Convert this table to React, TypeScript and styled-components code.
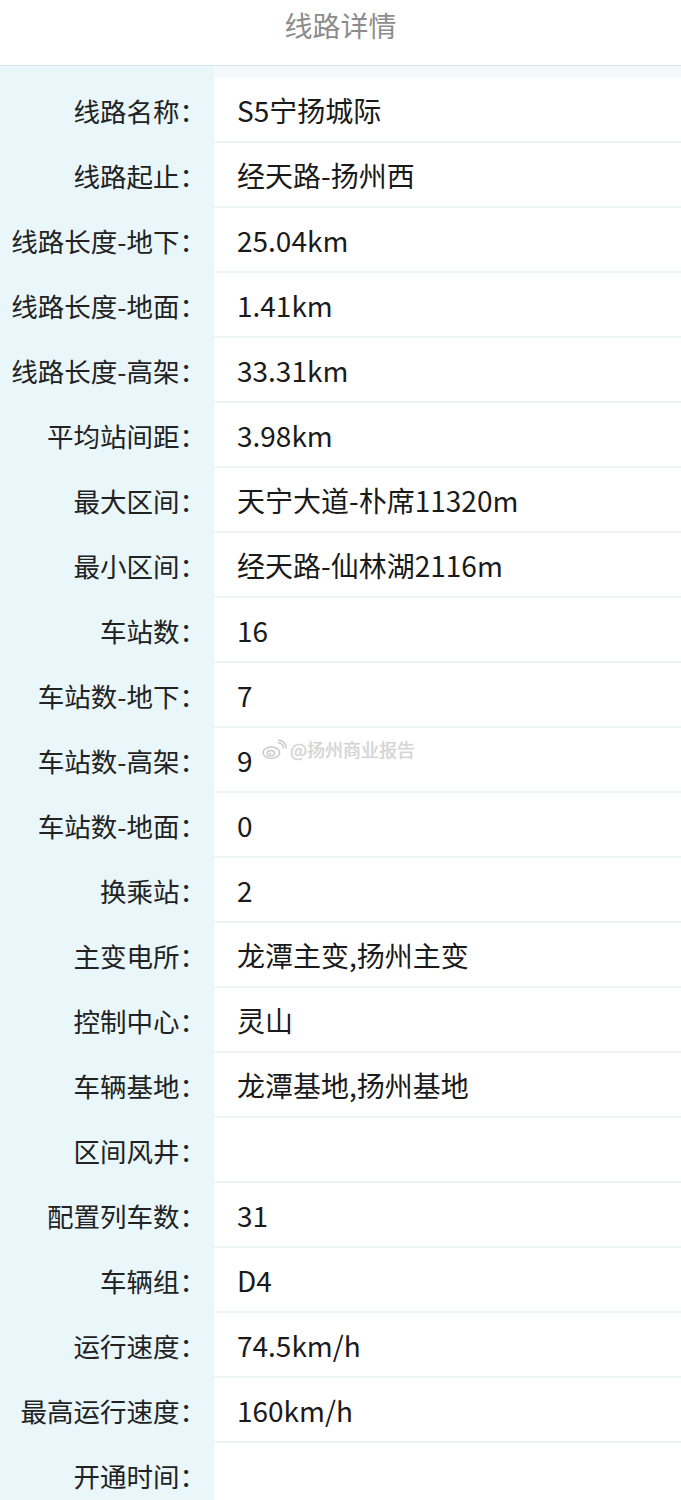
import React from "react";
import styled, { createGlobalStyle } from "styled-components";

const GlobalStyle = createGlobalStyle`
  html, body {
    margin: 0;
    padding: 0;
    background: #ffffff;
  }
  body {
    font-family: "Noto Sans CJK SC", "Noto Sans", sans-serif;
  }
`;

const Page = styled.div`
  width: 681px;
  min-height: 1500px;
  position: relative;
  background: #ffffff;
  overflow: hidden;
`;

const Header = styled.div`
  height: 66px;
  display: flex;
  align-items: flex-start;
  justify-content: center;
  padding-top: 5px;
  font-size: 28px;
  line-height: 40px;
  color: #8c8c8c;
  border-bottom: 1px solid #d6e9ef;
  box-sizing: border-box;
`;

const Table = styled.div`
  display: flex;
  flex-direction: column;
  padding-top: 12px;
  background: linear-gradient(to right, #e9f6fa 0, #e9f6fa 214px, #f3f9fb 214px);
`;

const Row = styled.div`
  display: grid;
  grid-template-columns: 214px 1fr;
  height: 65px;
`;

const Label = styled.div`
  background: #e9f6fa;
  display: flex;
  align-items: center;
  justify-content: flex-end;
  padding-right: 8px;
  font-size: 26.5px;
  color: #222;
  white-space: nowrap;
`;

const Value = styled.div<{ $last?: boolean }>`
  background: #ffffff;
  display: flex;
  align-items: center;
  padding-left: 23px;
  font-size: 28px;
  color: #1a1a1a;
  border-bottom: 2px solid ${(p) => (p.$last ? "#ffffff" : "#eef5f7")};
  white-space: nowrap;
`;

const Watermark = styled.div`
  position: absolute;
  left: 262px;
  top: 736px;
  display: flex;
  align-items: center;
  gap: 3px;
  font-size: 18px;
  color: #d4d4d4;
  text-shadow: 0 0 2px #ffffff, 0 0 1px #bdbdbd;
  pointer-events: none;
`;

const rows: [string, string][] = [
  ["线路名称：", "S5宁扬城际"],
  ["线路起止：", "经天路-扬州西"],
  ["线路长度-地下：", "25.04km"],
  ["线路长度-地面：", "1.41km"],
  ["线路长度-高架：", "33.31km"],
  ["平均站间距：", "3.98km"],
  ["最大区间：", "天宁大道-朴席11320m"],
  ["最小区间：", "经天路-仙林湖2116m"],
  ["车站数：", "16"],
  ["车站数-地下：", "7"],
  ["车站数-高架：", "9"],
  ["车站数-地面：", "0"],
  ["换乘站：", "2"],
  ["主变电所：", "龙潭主变,扬州主变"],
  ["控制中心：", "灵山"],
  ["车辆基地：", "龙潭基地,扬州基地"],
  ["区间风井：", ""],
  ["配置列车数：", "31"],
  ["车辆组：", "D4"],
  ["运行速度：", "74.5km/h"],
  ["最高运行速度：", "160km/h"],
  ["开通时间：", ""],
];

function WeiboMark() {
  return (
    <svg width="25" height="21" viewBox="0 0 24 20">
      <g fill="none" stroke="#c9c9c9" strokeWidth="1.4">
        <ellipse cx="9" cy="13" rx="8" ry="5.5" />
        <ellipse cx="8.5" cy="13.5" rx="3.5" ry="2.6" />
        <path d="M15 3.5a5 5 0 0 1 5.5 5.5" />
        <path d="M15.5 0.8a8 8 0 0 1 7.8 8.2" />
      </g>
      <circle cx="8" cy="13.8" r="1" fill="#c9c9c9" />
    </svg>
  );
}

export default function App() {
  return (
    <Page>
      <GlobalStyle />
      <Header>线路详情</Header>
      <Table>
        {rows.map(([label, value], i) => (
          <Row key={label}>
            <Label>{label}</Label>
            <Value $last={i === rows.length - 1}>{value}</Value>
          </Row>
        ))}
      </Table>
      <Watermark>
        <WeiboMark />
        <span>@扬州商业报告</span>
      </Watermark>
    </Page>
  );
}
